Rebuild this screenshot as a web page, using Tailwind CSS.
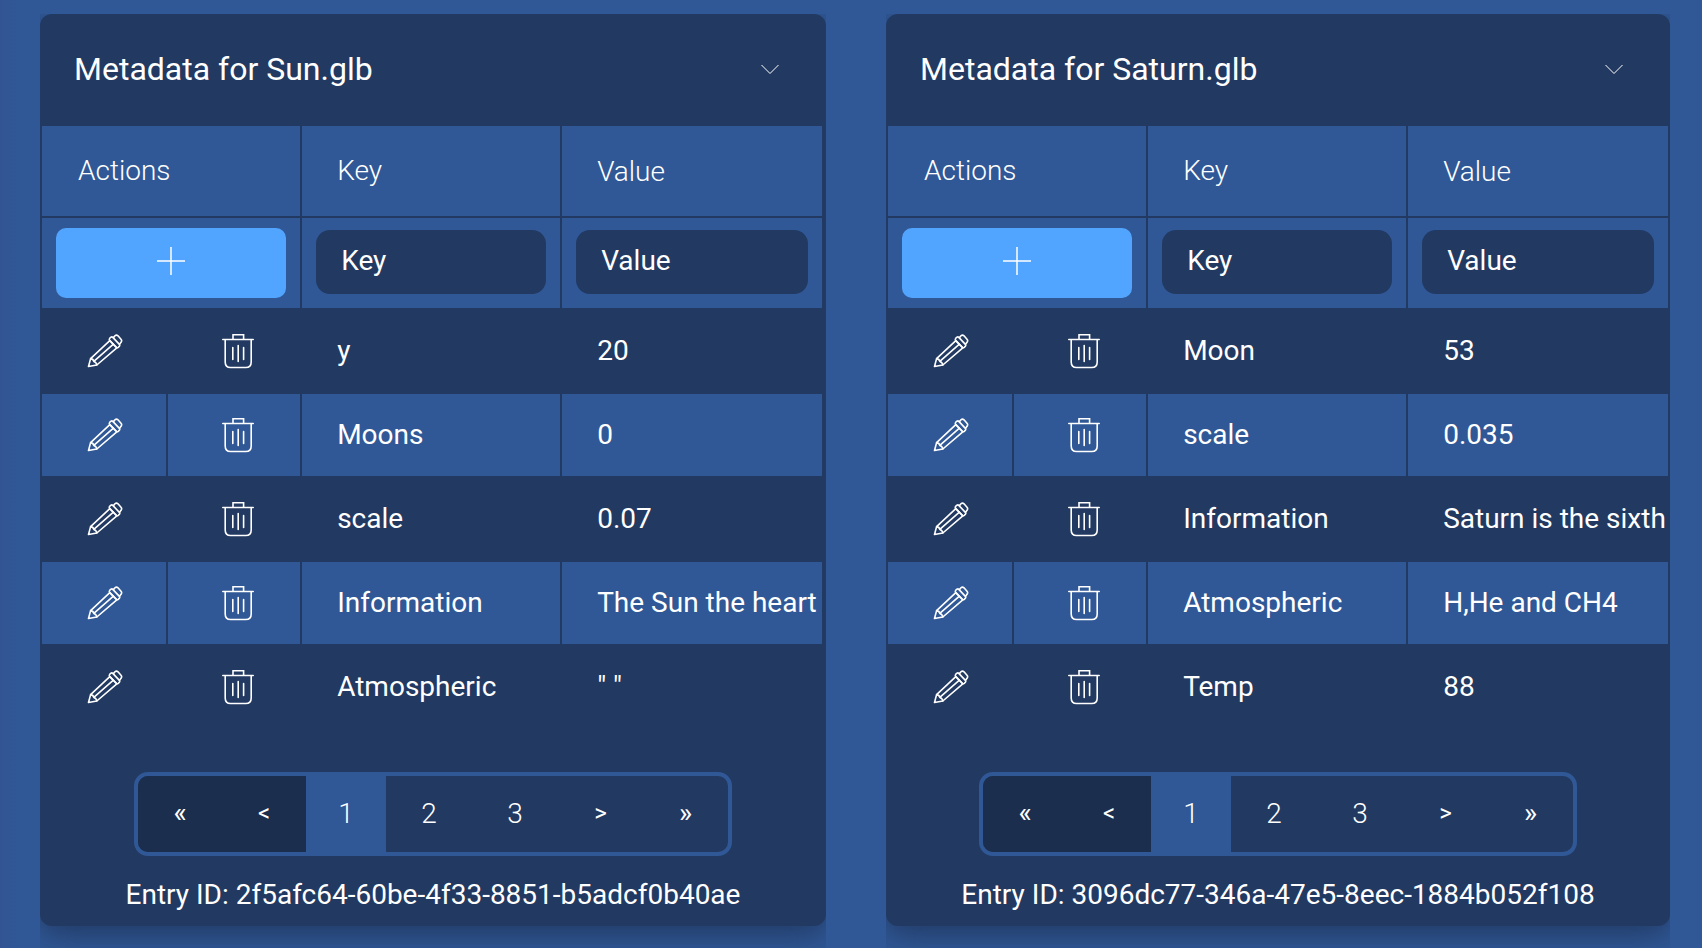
<!DOCTYPE html>
<html lang="en">
<head>
<meta charset="utf-8">
<meta name="viewport" content="width=device-width, initial-scale=1">
<title>Metadata</title>
<script src="https://cdn.jsdelivr.net/npm/@tailwindcss/browser@4"></script>
</head>
<body class="min-h-screen bg-[#305896] bg-linear-to-r from-[#335493] via-[#305896] via-[18px] to-[#305896] font-['Roboto',sans-serif] text-[28px] leading-9 text-white">
<svg class="hidden" aria-hidden="true">
  <symbol id="pencil" viewBox="0 0 36 36" fill="none" stroke="currentColor" stroke-width="1.6" stroke-linejoin="round" stroke-linecap="round">
    <path d="M1.5 33.5 3.6 25.6 22.8 7.6 29.8 14.8 9.8 32Z"/>
    <path d="M3.6 25.6Q6.4 26 6.8 28.4 9.4 29.2 9.8 32M6.8 28.4 26.4 11.2"/>
    <path d="M22.8 5.2 24 4.2Q25 3.6 25.8 4.4L32.4 11.4Q33.2 12.4 32.4 13.2L31.2 14.4Q30.2 15.2 29.2 14.2L22.6 7.4Q21.8 6.2 22.8 5.2Z"/>
    <path d="M26.4 4.6 28 2.8Q29.4 1.4 31 2.8L34 6.2Q35.2 7.6 34.2 9L32.6 11.2"/>
  </symbol>
  <symbol id="trash" viewBox="0 0 32 36" fill="none" stroke="currentColor" stroke-width="1.6" stroke-linecap="round">
    <path d="M.8 6.5H31.2M11 6V1.8H21.6V6M3.2 6.8V29Q3.2 34.5 8.6 34.5H23.8Q29.2 34.5 29.2 29V6.8M10.8 14.5V26.5M16.2 12.5V28.5M21.6 14.5V26.5"/>
  </symbol>
</svg>
<main id="cards" class="grid grid-cols-[393fr_392fr] items-start gap-[60px] pt-3.5 pr-8 pl-10"></main>

<template id="card">
  <div class="group min-w-0 [clip-path:inset(0_0_-40px_0)]">
    <section class="overflow-hidden rounded-xl bg-[#223962] pb-[13px] shadow-[0_8px_32px_rgba(26,43,75,0.7)]">
      <header class="flex h-[110px] items-center justify-between pr-11 pl-[34px]">
        <h2 class="text-[32px] leading-10" data-title></h2>
        <button type="button" aria-label="Collapse" class="flex h-6 w-6 items-center justify-center">
          <svg class="h-[18px] w-[18px]" viewBox="0 0 18 18" fill="none" stroke="currentColor" stroke-width="1"><path d="M.5 5 9 13.5 17.5 5"/></svg>
        </button>
      </header>
      <div class="group-first:pr-0.5">
      <table class="w-full table-fixed border-separate border-spacing-[2px]">
        <colgroup><col class="w-[16%]"><col class="w-[17.1%]"><col class="w-1/3"><col></colgroup>
        <thead>
          <tr class="h-[90px] bg-[#305896] text-left">
            <th colspan="2" class="pl-9 font-light">Actions</th>
            <th class="pl-[35px] font-light">Key</th>
            <th class="pt-0.5 pl-[35px] font-light">Value</th>
          </tr>
          <tr class="h-[90px] bg-[#305896]">
            <td colspan="2" class="px-3.5">
              <button type="button" aria-label="Add entry" class="flex h-[70px] w-full items-center justify-center rounded-[10px] bg-[#52a5fe] pb-1">
                <svg class="h-7 w-7" viewBox="0 0 28 28" fill="none" stroke="currentColor" stroke-width="1.5"><path d="M14 0V28M0 14H28"/></svg>
              </button>
            </td>
            <td class="px-3.5 pb-0.5"><input type="text" aria-label="Key" placeholder="Key" class="block h-16 w-full rounded-[14px] bg-[#223962] px-[25px] pb-1 placeholder:text-white placeholder:opacity-100"></td>
            <td class="px-3.5 pb-0.5"><input type="text" aria-label="Value" placeholder="Value" class="block h-16 w-full rounded-[14px] bg-[#223962] px-[25px] pb-1 placeholder:text-white placeholder:opacity-100"></td>
          </tr>
        </thead>
        <tbody></tbody>
      </table>
      </div>
      <nav aria-label="Pages" class="mt-[42px] flex justify-center">
        <div class="flex h-[84px] overflow-hidden rounded-[14px] border-4 border-[#305896]">
          <button type="button" aria-label="First page" disabled class="w-[84px] bg-[#1b2e4e] pb-0.5">«</button>
          <button type="button" aria-label="Previous page" disabled class="w-[84px] bg-[#1b2e4e] pb-0.5 text-2xl">&lt;</button>
          <button type="button" aria-current="page" class="w-20 bg-[#305896] font-light">1</button>
          <button type="button" class="w-[86px] font-light">2</button>
          <button type="button" class="w-[86px] font-light">3</button>
          <button type="button" aria-label="Next page" class="w-[85px] pb-0.5 text-2xl">&gt;</button>
          <button type="button" aria-label="Last page" class="w-[85px] pb-0.5">»</button>
        </div>
      </nav>
      <p class="mt-[21px] text-center" data-id></p>
    </section>
  </div>
</template>

<template id="row">
  <tr class="h-[82px] even:bg-[#305896]">
    <td><button type="button" aria-label="Edit" class="mx-auto block pl-0.5"><svg class="h-9 w-9"><use href="#pencil"/></svg></button></td>
    <td><button type="button" aria-label="Delete" class="mx-auto block pl-2"><svg class="h-9 w-8"><use href="#trash"/></svg></button></td>
    <td class="overflow-hidden pl-[35px] whitespace-nowrap"></td>
    <td class="overflow-hidden pl-[35px] whitespace-nowrap"></td>
  </tr>
</template>

<script>
const entries = [
  { file: "Sun.glb", id: "2f5afc64-60be-4f33-8851-b5adcf0b40ae",
    rows: [["y", "20"], ["Moons", "0"], ["scale", "0.07"], ["Information", "The Sun the heart"], ["Atmospheric", "\" \""]] },
  { file: "Saturn.glb", id: "3096dc77-346a-47e5-8eec-1884b052f108",
    rows: [["Moon", "53"], ["scale", "0.035"], ["Information", "Saturn is the sixth"], ["Atmospheric", "H,He and CH4"], ["Temp", "88"]] }
];
for (const entry of entries) {
  const card = document.getElementById("card").content.cloneNode(true);
  card.querySelector("[data-title]").textContent = "Metadata for " + entry.file;
  card.querySelector("[data-id]").textContent = "Entry ID: " + entry.id;
  for (const [key, value] of entry.rows) {
    const row = document.getElementById("row").content.cloneNode(true);
    const cells = row.querySelectorAll("td");
    cells[2].textContent = key;
    cells[3].textContent = value;
    card.querySelector("tbody").append(row);
  }
  document.getElementById("cards").append(card);
}
</script>
</body>
</html>
